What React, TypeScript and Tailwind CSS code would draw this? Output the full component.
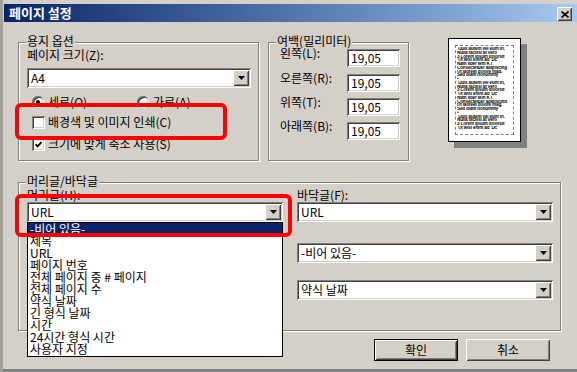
import React from "react";

const raised =
  "shadow-[inset_1px_1px_0_#ffffff,inset_-1px_-1px_0_#404040,inset_2px_2px_0_#d4d0c8,inset_-2px_-2px_0_#808080]";
const sunken =
  "shadow-[inset_1px_1px_0_#808080,inset_-1px_-1px_0_#ffffff,inset_2px_2px_0_#404040,inset_-2px_-2px_0_#d4d0c8]";
const etched = "border border-[#808080] shadow-[inset_1px_1px_0_#ffffff,1px_1px_0_#ffffff]";

function Group({ label, className, children }: { label: string; className: string; children: React.ReactNode }) {
  return (
    <div className={`relative ${etched} ${className}`}>
      <span className="absolute left-[7px] top-[-9px] px-[1px] bg-[#d4d0c8] leading-[14px]">{label}</span>
      {children}
    </div>
  );
}

function Combo({ value, className = "" }: { value: string; className?: string }) {
  return (
    <div className={`h-[20px] bg-white ${sunken} flex items-center p-[2px] ${className}`}>
      <span className="flex-1 pl-[2px] leading-[16px] whitespace-nowrap overflow-hidden">{value}</span>
      <span className={`w-[16px] h-[16px] bg-[#d4d0c8] ${raised} flex items-center justify-center`}>
        <svg width="7" height="4" viewBox="0 0 7 4">
          <path d="M0 0h7L3.5 4z" fill="#000" />
        </svg>
      </span>
    </div>
  );
}

function Radio({ checked }: { checked?: boolean }) {
  return (
    <span className={`w-[12px] h-[12px] rounded-full bg-white ${sunken} flex items-center justify-center shrink-0`}>
      {checked && <span className="w-[4px] h-[4px] rounded-full bg-black" />}
    </span>
  );
}

function Check({ checked }: { checked?: boolean }) {
  return (
    <span className={`w-[13px] h-[13px] bg-white ${sunken} flex items-center justify-center shrink-0`}>
      {checked && (
        <svg width="7" height="7" viewBox="0 0 7 7">
          <path d="M0.5 3.2L2.6 5.4L6.5 1.2" stroke="#000" strokeWidth="1.8" fill="none" />
        </svg>
      )}
    </span>
  );
}

const margins = [
  { label: "왼쪽(L):", mt: "" },
  { label: "오른쪽(R):", mt: "mt-[7px]" },
  { label: "위쪽(T):", mt: "mt-[6px]" },
  { label: "아래쪽(B):", mt: "mt-[6px]" },
];

const previewLines = [
  " Duis autem vel eum iri,",
  "Nulla facilisi at vero",
  "3 Lorem ipsum dolorsit",
  " Ut wisi enim ad 'Dc'",
  "Nam liber tem K l",
  "Consectetuer adipiscing",
  "Ut laoreet dolore mag,",
  "Sed diam nonummy",
  "•",
  " Duis autem vel eum iri,",
  "Nulla facilisi at vero",
  "3 Lorem ipsum dolorsit",
  " Ut wisi enim ad 'Dc'",
  "Nam liber tem K l",
  "Consectetuer adipiscing",
  "Ut laoreet dolore mag,",
  "Sed diam nonummy",
  "•",
  " Duis autem vel eum iri,",
  "Nulla facilisi at vero",
  "3 Lorem ipsum dolorsit",
  " Ut wisi enim ad 'Dc'",
];

const headerOptions = [
  "-비어 있음-",
  "제목",
  "URL",
  "페이지 번호",
  "전체 페이지 중 # 페이지",
  "전체 페이지 수",
  "약식 날짜",
  "긴 형식 날짜",
  "시간",
  "24시간 형식 시간",
  "사용자 지정",
];

export default function App() {
  return (
    <div className="relative w-[577px] h-[372px] overflow-hidden bg-[#d4d0c8] pt-[4px] text-[12px] text-black font-['Noto_Sans_CJK_KR','Noto_Sans_CJK_SC',sans-serif] shadow-[inset_3px_0_0_#a3a19b,inset_0_-3px_0_#808080]">
      {/* title bar */}
      <div className="ml-[4px] h-[18px] flex items-start justify-between bg-linear-to-r from-[#0a246a] to-[#a6caf0]">
        <span className="pl-[5px] text-[13px] font-bold leading-[18px] text-white">페이지 설정</span>
        <span className={`mt-[3px] mr-[5px] w-[15px] h-[14px] bg-[#d4d0c8] ${raised} flex items-center justify-center`}>
          <svg width="8" height="7" viewBox="0 0 8 7">
            <path d="M0.5 0.5L7.5 6.5M7.5 0.5L0.5 6.5" stroke="#000" strokeWidth="1.6" />
          </svg>
        </span>
      </div>

      <div className="pl-[18px] flex flex-col">
        {/* top row */}
        <div className="flex items-start mt-[16px]">
          <Group label="용지 옵션" className="w-[241px] h-[119px] mt-[4px] pl-[8px] pt-[5px]">
            <div className="leading-[14px]">페이지 크기(Z):</div>
            <Combo value="A4" className="w-[224px] mt-[6px]" />
            <div className="flex items-center h-[14px] mt-[7px] pl-[5px] leading-[14px]">
              <div className="flex items-center gap-[4px] w-[105px]">
                <Radio checked />
                <span>세로(O)</span>
              </div>
              <div className="flex items-center gap-[4px]">
                <Radio />
                <span>가로(A)</span>
              </div>
            </div>
            <div className="flex items-center gap-[3px] h-[14px] mt-[6px] pl-[5px] leading-[14px]">
              <Check />
              <span>배경색 및 이미지 인쇄(C)</span>
            </div>
            <div className="flex items-center gap-[3px] h-[14px] mt-[8px] pl-[5px] leading-[14px]">
              <Check checked />
              <span>크기에 맞게 축소 사용(S)</span>
            </div>
          </Group>

          <Group label="여백(밀리미터)" className="w-[141px] h-[119px] mt-[4px] ml-[9px] pl-[11px] pt-[6px]">
            {margins.map((m) => (
              <div key={m.label} className={`flex items-start ${m.mt}`}>
                <span className="w-[67px] -mt-[3px] leading-[14px] whitespace-nowrap">{m.label}</span>
                <span className={`w-[53px] h-[18px] bg-white ${sunken} pl-[4px] leading-[18px]`}>19,05</span>
              </div>
            ))}
          </Group>

          <div className="ml-[39px] w-[73px] h-[104px] bg-white border border-black shadow-[6px_6px_0_#808080] p-[6px]">
            <div className="w-full h-full border border-dashed border-[#808080] pl-[1px] pt-[1px] overflow-hidden font-['Liberation_Sans',sans-serif] font-bold text-[4.6px] leading-[3.75px] tracking-[-0.15px]">
              {previewLines.map((l, i) => (
                <div key={i} className="whitespace-pre overflow-hidden">
                  {l}
                </div>
              ))}
            </div>
          </div>
        </div>

        {/* header / footer */}
        <Group label="머리글/바닥글" className="w-[543px] h-[149px] mt-[21px] pl-[8px] pt-[5px] flex gap-[14px]">
          <div className="w-[256px]">
            <div className="leading-[14px]">머리글(H):</div>
            <Combo value="URL" />
            <Combo value="-비어 있음-" className="mt-[21px]" />
            <Combo value="전체 페이지 중 # 페이지" className="mt-[17px]" />
          </div>
          <div className="w-[256px]">
            <div className="leading-[14px]">바닥글(F):</div>
            <Combo value="URL" />
            <Combo value="-비어 있음-" className="mt-[21px]" />
            <Combo value="약식 날짜" className="mt-[17px]" />
          </div>
        </Group>

        {/* buttons */}
        <div className="flex justify-end gap-[8px] mt-[8px] pr-[27px]">
          <button className={`w-[84px] h-[22px] border border-black bg-[#d4d0c8] ${raised} leading-[18px]`}>확인</button>
          <button className={`w-[84px] h-[22px] bg-[#d4d0c8] ${raised} leading-[20px]`}>취소</button>
        </div>
      </div>

      {/* open dropdown list */}
      <div className="absolute left-[27px] top-[222px] w-[256px] h-[135px] bg-white border border-black">
        {headerOptions.map((o, i) => (
          <div
            key={o}
            className={`h-[12px] leading-[12px] pl-[2px] whitespace-nowrap ${i === 0 ? "bg-[#0a246a] text-white" : ""}`}
          >
            {o}
          </div>
        ))}
      </div>

      {/* red annotation boxes */}
      <div className="absolute left-[15px] top-[103px] w-[212px] h-[37px] border-[4px] border-[#ff0000] rounded-[6px]" />
      <div className="absolute left-[15px] top-[194px] w-[277px] h-[43px] border-[4px] border-[#ff0000] rounded-[6px]" />
    </div>
  );
}
